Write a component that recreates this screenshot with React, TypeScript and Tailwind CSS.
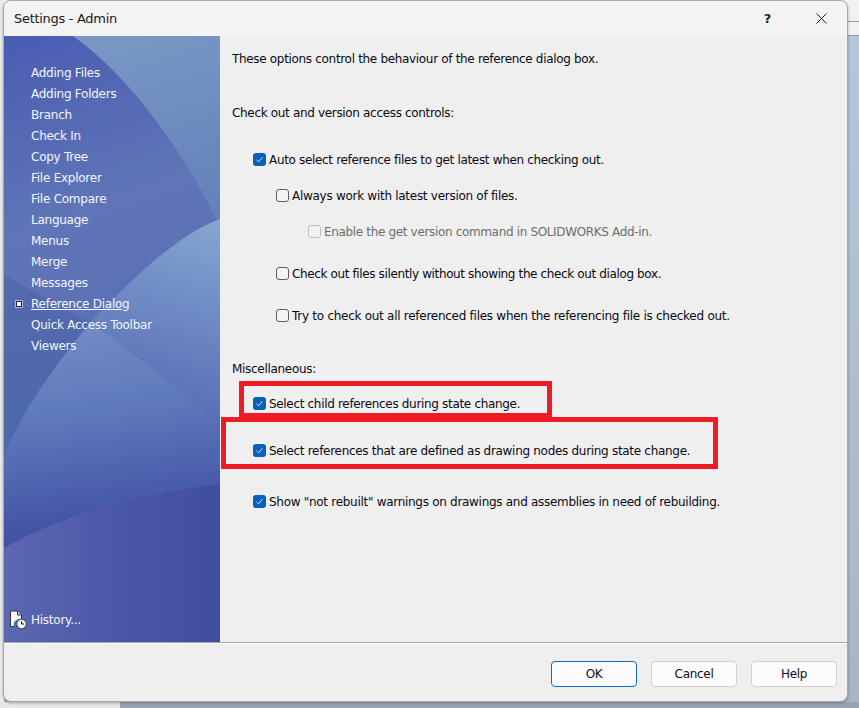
const font = { fontFamily: '"DejaVu Sans", sans-serif' };

function Check({ state = "on" }: { state?: "on" | "off" | "disabled" }) {
  if (state === "on") {
    return (
      <span className="mb-[2px] flex h-[13px] w-[13px] shrink-0 items-center justify-center rounded-[3px] bg-[#0860bd]">
        <svg width="9" height="9" viewBox="0 0 9 9" fill="none">
          <path d="M1.5 4.8 L3.6 6.8 L7.6 2.2" stroke="#cfe2f5" strokeWidth="1" />
        </svg>
      </span>
    );
  }
  return (
    <span
      className={
        state === "off"
          ? "mb-[2px] h-[13px] w-[13px] shrink-0 rounded-[3px] border border-[#5f5f5f] bg-[#f4f4f4]"
          : "mb-[2px] h-[13px] w-[13px] shrink-0 rounded-[3px] border border-[#bdbdbd] bg-[#f2f2f2]"
      }
    />
  );
}

function Opt({
  label,
  state = "on",
  indent,
  top,
  muted,
  track = "",
}: {
  label: string;
  state?: "on" | "off" | "disabled";
  indent: string;
  top: string;
  muted?: boolean;
  track?: string;
}) {
  return (
    <div className={`flex h-[18px] items-center gap-[3px] ${indent} ${top}`}>
      <Check state={state} />
      <span className={`whitespace-nowrap ${track} ${muted ? "text-[#6d6d6d]" : "text-[#0a0a14]"}`}>{label}</span>
    </div>
  );
}

const items = [
  "Adding Files",
  "Adding Folders",
  "Branch",
  "Check In",
  "Copy Tree",
  "File Explorer",
  "File Compare",
  "Language",
  "Menus",
  "Merge",
  "Messages",
  "Reference Dialog",
  "Quick Access Toolbar",
  "Viewers",
];

function SidebarArt() {
  return (
    <svg className="absolute inset-0 h-full w-full" viewBox="0 0 216 606" preserveAspectRatio="none">
      <defs>
        <linearGradient id="base" gradientUnits="userSpaceOnUse" x1="0" y1="0" x2="110" y2="300">
          <stop offset="0" stopColor="#4a5cb1" />
          <stop offset="0.6" stopColor="#5f75b7" />
          <stop offset="1" stopColor="#5a70b4" />
        </linearGradient>
        <linearGradient id="top" gradientUnits="userSpaceOnUse" x1="130" y1="0" x2="190" y2="190">
          <stop offset="0" stopColor="#7897c4" />
          <stop offset="1" stopColor="#6480ba" />
        </linearGradient>
        <linearGradient id="band" gradientUnits="userSpaceOnUse" x1="216" y1="183" x2="160" y2="365">
          <stop offset="0" stopColor="#87a6d0" />
          <stop offset="0.5" stopColor="#6f8bc5" />
          <stop offset="1" stopColor="#5a70b6" />
        </linearGradient>
        <linearGradient id="lower" gradientUnits="userSpaceOnUse" x1="40" y1="290" x2="70" y2="490">
          <stop offset="0" stopColor="#738cc5" />
          <stop offset="0.45" stopColor="#5f7abc" />
          <stop offset="1" stopColor="#4353a4" />
        </linearGradient>
        <linearGradient id="wedge" gradientUnits="userSpaceOnUse" x1="0" y1="240" x2="0" y2="420">
          <stop offset="0" stopColor="#5468ad" />
          <stop offset="1" stopColor="#4c6aac" />
        </linearGradient>
        <linearGradient id="foot" gradientUnits="userSpaceOnUse" x1="0" y1="560" x2="216" y2="560">
          <stop offset="0" stopColor="#5b67b1" />
          <stop offset="0.6" stopColor="#4956a6" />
          <stop offset="1" stopColor="#414d9f" />
        </linearGradient>
      </defs>
      <rect width="216" height="606" fill="url(#base)" />
      <path d="M69 0 C115 32 172 100 216 190 L216 0 Z" fill="url(#top)" />
      <path d="M0 239 L86 287 C55 325 20 370 0 421 Z" fill="url(#wedge)" />
      <path d="M216 183 C175 198 129 241 86 287 C130 315 175 355 216 387 Z" fill="url(#band)" />
      <path d="M86 287 C130 315 175 355 216 387 L216 606 L0 606 L0 421 C20 370 55 325 86 287 Z" fill="url(#lower)" />
      <path d="M0 512 C50 484 110 462 216 448 L216 606 L0 606 Z" fill="url(#foot)" />
    </svg>
  );
}

function HistoryIcon() {
  return (
    <svg width="18" height="20" viewBox="0 0 18 20" className="shrink-0">
      <path d="M1.5 1 H8.5 L12.5 5 V16.5 H1.5 Z" fill="#f5f5f8" stroke="#33333e" strokeWidth="1" />
      <path d="M8.5 1 V5 H12.5" fill="#c9ccd8" stroke="#33333e" strokeWidth="1" />
      <path d="M5.5 18 A6 6 0 0 1 11.5 9 L11 14 Z" fill="#2f7fa8" />
      <circle cx="12.5" cy="14" r="4.8" fill="#fbfbfb" stroke="#474c66" strokeWidth="1.2" />
      <path d="M12.5 11.2 V14 H15.2" fill="none" stroke="#111" strokeWidth="1" />
    </svg>
  );
}

function Btn({ label, primary }: { label: string; primary?: boolean }) {
  return (
    <div
      className={`flex h-[26px] w-[86px] items-center justify-center rounded-[4px] border bg-[#fcfcfc] text-[#101018] ${
        primary ? "border-[#0a6cc4]" : "border-[#cfcfcf]"
      }`}
    >
      {label}
    </div>
  );
}

export default function App() {
  return (
    <div
      style={font}
      className="relative h-[708px] w-[859px] overflow-hidden bg-gradient-to-b from-[#b7c7da] to-[#a8b5c6] text-[12px] tracking-[-0.3px]"
    >
      {/* desktop behind the dialog */}
      <div className="absolute left-0 top-0 h-[36px] w-full border-b border-[#8f99a8] bg-[#f1f1f1]">
        <div className="mt-[21px] h-px w-full bg-[#a0a0a0]" />
      </div>
      <div className="absolute left-0 top-0 h-full w-[4px] bg-[#ececec]" />
      <div className="absolute bottom-0 left-[120px] right-0 h-[6px] bg-[#98a4b5]" />
      <div className="absolute bottom-0 left-0 h-[6px] w-[120px] bg-[#e6e6e6]" />

      <div className="relative ml-[3px] flex h-[702px] w-[845px] flex-col overflow-hidden rounded-[8px] border border-[#a8a8a8] bg-[#efefef] shadow-[0_1px_3px_rgba(0,0,0,0.3)]">
        <div className="flex h-[35px] shrink-0 items-center bg-[#f3f3f3] pl-[10px] text-[13px] text-[#1a1a1a]">
          <span>Settings - Admin</span>
          <span className="ml-auto mr-[45px] font-bold text-[#222]">?</span>
          <svg width="11" height="11" viewBox="0 0 11 11" className="mr-[20px]" fill="none">
            <path d="M0.5 0.5 L10.5 10.5 M10.5 0.5 L0.5 10.5" stroke="#222" strokeWidth="1" />
          </svg>
        </div>

        <div className="flex min-h-0 flex-1">
          <aside className="relative flex w-[216px] shrink-0 flex-col overflow-hidden pb-[12px] pl-[6px] pt-[26px] tracking-[-0.25px] text-[#f2f5fb]">
            <SidebarArt />
            <div className="relative flex flex-col">
              {items.map((t) => (
                <div key={t} className="flex h-[21px] items-center">
                  <span className="flex w-[21px] shrink-0 items-center justify-start pl-[6px]">
                    {t === "Reference Dialog" && (
                      <span className="h-[6px] w-[6px] border border-[#1c2450] bg-white ring-1 ring-white/50" />
                    )}
                  </span>
                  <span className={t === "Reference Dialog" ? "underline" : ""}>{t}</span>
                </div>
              ))}
            </div>
            <div className="relative ml-[-1px] mt-auto flex h-[20px] items-center gap-[4px]">
              <HistoryIcon />
              <span>History...</span>
            </div>
          </aside>

          <main className="relative min-w-0 flex-1 pl-[12px] pt-[14px]">
            <div className="h-[18px] leading-[18px] tracking-[-0.32px] text-[#0a0a14]">
              These options control the behaviour of the reference dialog box.
            </div>
            <div className="mt-[36px] h-[18px] leading-[18px] tracking-[-0.33px] text-[#0a0a14]">
              Check out and version access controls:
            </div>
            <Opt indent="ml-[21px]" top="mt-[29px]" track="tracking-[-0.33px]" label="Auto select reference files to get latest when checking out." />
            <Opt indent="ml-[44px]" top="mt-[18px]" state="off" track="tracking-[-0.28px]" label="Always work with latest version of files." />
            <Opt
              indent="ml-[76px]"
              top="mt-[18px]"
              state="disabled"
              muted
              track="tracking-[-0.34px]"
              label="Enable the get version command in SOLIDWORKS Add-in."
            />
            <Opt indent="ml-[44px]" top="mt-[24px]" state="off" track="tracking-[-0.37px]" label="Check out files silently without showing the check out dialog box." />
            <Opt indent="ml-[44px]" top="mt-[24px]" state="off" track="tracking-[-0.27px]" label="Try to check out all referenced files when the referencing file is checked out." />
            <div className="mt-[35px] h-[18px] leading-[18px] text-[#0a0a14]">Miscellaneous:</div>
            <Opt indent="ml-[21px]" top="mt-[17px]" track="tracking-[-0.32px]" label="Select child references during state change." />
            <Opt indent="ml-[21px]" top="mt-[29px]" label="Select references that are defined as drawing nodes during state change." />
            <Opt indent="ml-[21px]" top="mt-[33px]" track="tracking-[-0.29px]" label={'Show "not rebuilt" warnings on drawings and assemblies in need of rebuilding.'} />

            <div className="absolute left-[19px] top-[345px] h-[37px] w-[313px] border-[5px] border-[#ed1c24]" />
            <div className="absolute left-[1px] top-[381px] h-[52px] w-[497px] border-[5px] border-[#ed1c24]" />
          </main>
        </div>

        <div className="flex h-[59px] shrink-0 items-start justify-end gap-[14px] border-t border-[#a5a5a5] pr-[10px] pt-[18px] shadow-[inset_0_1px_0_#ffffff]">
          <Btn label="OK" primary />
          <Btn label="Cancel" />
          <Btn label="Help" />
        </div>
      </div>
    </div>
  );
}
